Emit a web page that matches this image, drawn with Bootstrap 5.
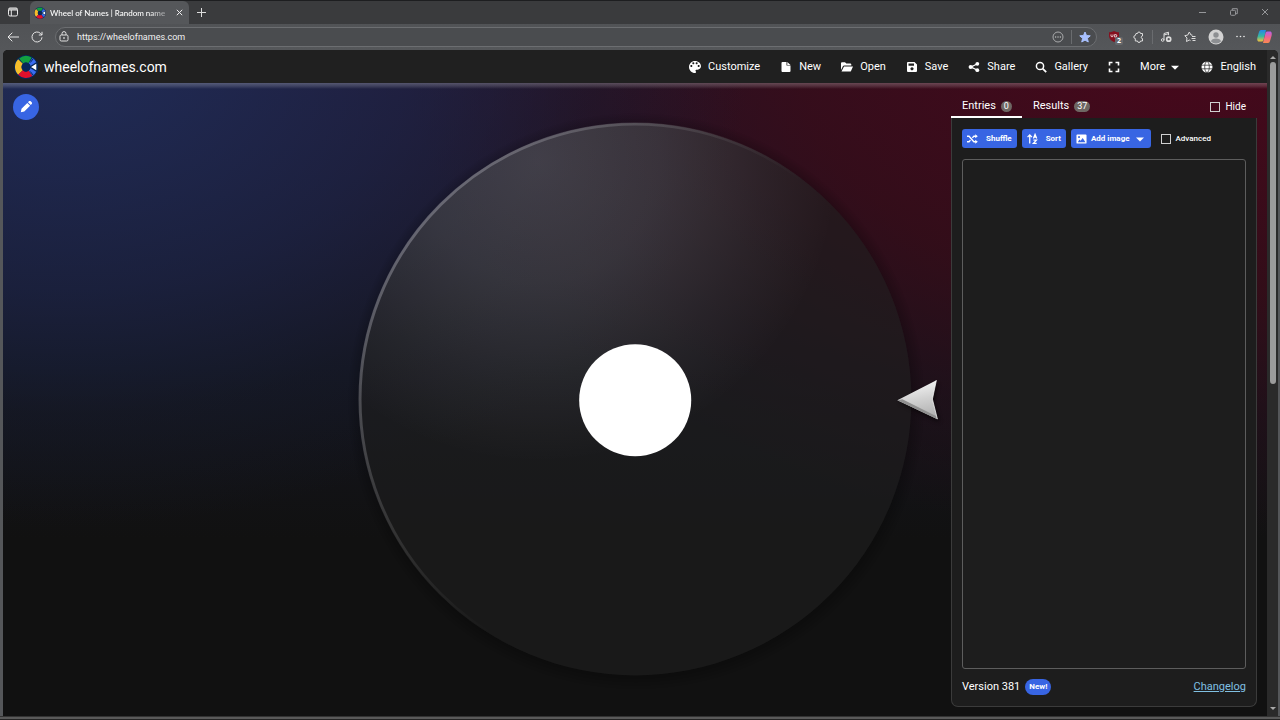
<!DOCTYPE html>
<html lang="en" data-bs-theme="dark">
<head>
<meta charset="utf-8">
<meta name="viewport" content="width=device-width, initial-scale=1">
<title>Wheel of Names | Random name picker</title>
<link rel="stylesheet" href="https://cdn.jsdelivr.net/npm/bootstrap@5.3.0/dist/css/bootstrap.min.css">
<style>
  body { font-family: Roboto, sans-serif; font-size: 11px; line-height: 16px; color: #fff; background: #55575a; }
  svg { display: block; flex: none; }
  button.plain { background: none; border: 0; padding: 0; color: inherit; display: flex; align-items: center; }

  /* browser frame */
  .chrome { font-family: Lato, sans-serif; font-size: 8px; line-height: 12px; color: #fff; }
  .titlebar { height: 24px; background: #3a3b3d; border-top: 1px solid #1d1e20; padding-bottom: 1px; }
  .tab-actions { width: 30px; }
  .browser-tab { width: 159px; background: #55575a; border-radius: 6px 6px 0 0; padding: 0 6px 0 4px; margin-bottom: -1px; }
  .tab-title { font-weight: 500; white-space: nowrap; -webkit-mask-image: linear-gradient(90deg, #000 85%, rgba(0,0,0,.4)); mask-image: linear-gradient(90deg, #000 85%, rgba(0,0,0,.4)); }
  .window-btns { gap: 23px; padding-right: 11px; color: #96979a; }
  .toolbar { height: 26px; padding: 0 8px 1px 7px; background: linear-gradient(#515356, #55575a); }
  .address { height: 20px; border-radius: 10px; border: 1px solid #6c6e71; background: #4a4c4f; padding: 0 5px 0 3px; }
  .address input { background: none; border: 0; outline: 0; color: #f1f1f1; padding: 0; font: 9px/12px Roboto, sans-serif; min-width: 0; }
  .divider { width: 1px; height: 14px; background: #6a6c6f; margin: 0 7px; }
  .extensions { gap: 12px; }
  .extensions .divider { margin: 0 -5px; }
  .blocked { right: -2px; bottom: -1px; background: #66686c; border-radius: 2px; font: 700 7px/8px "Open Sans", sans-serif; padding: 0 2px; }

  /* page inside the window */
  .viewport { margin: 0 2px 0 3px; border-radius: 5px 5px 0 0; overflow: hidden; background: #111; }
  .frame-bottom { height: 4px; background: linear-gradient(#333 1px, #5a5a5a 1px 3px, #242424 3px); }
  .topbar { height: 33px; background: #202020; padding: 0 11px; font-size: 11px; font-weight: 500; }
  .topbar .brand { font-size: 14px; font-weight: 400; color: #fff; text-decoration: none; gap: 6px; }
  .menu { gap: 20px; }
  .menu button { gap: 7px; }
  .menu .more { gap: 4px; }
  .stage {
    display: grid; grid-template-columns: minmax(0, 1fr) auto minmax(0, 1fr);
    background:
      linear-gradient(rgba(255,255,255,.24), rgba(255,255,255,.14) 3px, rgba(255,255,255,0) 6px),
      radial-gradient(ellipse 54% 74% at 5% -4%, rgba(30,50,98,.8), rgba(27,39,76,.6) 50%, rgba(24,32,54,.3) 76%, rgba(17,17,17,0)),
      radial-gradient(ellipse 62% 76% at 94% -4%, rgba(76,6,24,.85), rgba(60,10,20,.7) 50%, rgba(44,12,22,.45) 76%, rgba(17,17,17,0)),
      linear-gradient(#26152e, #14151f 45%, #111 72%);
  }
  .edit-btn { width: 26px; height: 26px; background: #3865e3 !important; justify-content: center; margin: 11px 0 0 10px; }
  .wheel-area { align-self: center; }
  .wheel { width: 77vh; max-width: 100%; height: auto; overflow: visible; }

  .side { width: 306px; max-width: 100%; margin: 12px 10px 9px auto; }
  .entry-tabs { height: 23px; font-weight: 500; }
  .entry-tabs button { padding: 1px 10px 0 11px !important; gap: 5px; border-bottom: 2px solid transparent; height: 100%; }
  .entry-tabs button.active { border-bottom-color: #fff; }
  .count { background: #6e6763; border-radius: 6px; font-size: 9px; line-height: 11px; height: 11px; padding: 0 3px; }
  .hide-label { font-size: 10px; font-weight: 400; padding-right: 11px; gap: 5px; }
  .pane { background: #1d1d1d; border: 1px solid #3b3b3b; border-top: 0; border-radius: 0 0 7px 7px; padding: 11px 10px; }
  .tool { background: #3865e3; color: #fff; border: 0; border-radius: 3px; height: 19px; font-size: 8px; line-height: 12px; font-weight: 700; display: flex; align-items: center; padding: 0 5px; }
  .tool-row { gap: 5px; }
  .box { appearance: none; width: 10px; height: 10px; border: 1px solid #d0d0d0; margin: 0; flex: none; }
  .advanced { font-size: 8px; font-weight: 500; gap: 5px; margin-left: 5px; }
  .entries { background: #1d1d1d; border: 1px solid #5d5d5d; border-radius: 3px; resize: none; outline: 0; color: #fff; margin: 11px 0 10px; }
  .new-pill { background: #3865e3; border-radius: 8px; font-size: 8px; line-height: 16px; font-weight: 700; padding: 0 4px; margin-left: 5px; }
  .changes { color: #80c0e2; }

  .scroller { width: 11px; background: #2a2a2a; }
  .thumb { width: 6px; flex: 0 0 322px; background: #9b9b9b; border-radius: 3px; }
</style>
</head>
<body class="d-flex flex-column min-vh-100">

<svg width="0" height="0" class="position-absolute" aria-hidden="true">
  <symbol id="logo" viewBox="0 0 24 24">
    <circle cx="12" cy="12" r="12" fill="#07285a"/>
    <g fill="none" stroke-width="6.500">
      <path d="M16.600 5.600A7.800 7.800 0 0 1 16.600 18.400" stroke="#3a6cf0"/>
      <path d="M6.500 17.500A7.800 7.800 0 0 1 6.500 6.500" stroke="#f5bd2a"/>
      <path d="M7.200 6A7.800 7.800 0 0 1 16 5.400" stroke="#12a040"/>
      <path d="M16.500 18.400A7.800 7.800 0 0 1 6.500 17.500" stroke="#e0102c"/>
    </g>
    <path d="M16.300 7.500l2.700-3.500M16.300 16.500L19 20" stroke="#07285a"/>
    <circle cx="12" cy="12" r="4.400" fill="#07285a"/>
    <path d="M16 12l7-4.500v9z" fill="#fff" stroke="#07285a" stroke-width="1.400"/>
  </symbol>
</svg>

<header class="chrome">
  <div class="titlebar d-flex">
    <button class="plain tab-actions px-2" aria-label="Tab actions">
      <svg width="10" height="10" viewBox="0 0 10 10" fill="none" stroke="#e8e8e8"><rect x=".5" y="1" width="9" height="8" rx="1.5"/><path d="M1 2h8M1 3h8M3.3 3v6"/></svg>
    </button>
    <div class="browser-tab d-flex align-items-center">
      <svg width="12" height="12" class="me-1"><use href="#logo"/></svg>
      <span class="tab-title">Wheel of Names | Random name</span>
      <button class="plain ms-auto" aria-label="Close tab"><svg width="7" height="7" viewBox="0 0 7 7" stroke="#eee"><path d="M.8.8l5.4 5.4M6.2.8L.8 6.2"/></svg></button>
    </div>
    <button class="plain ms-2" aria-label="New tab"><svg width="9" height="9" viewBox="0 0 9 9" stroke="#ddd"><path d="M4.5 0v9M0 4.5h9"/></svg></button>
    <div class="window-btns d-flex align-items-center ms-auto">
      <button class="plain" aria-label="Minimize"><svg width="8" height="8" viewBox="0 0 8 8" stroke="currentColor" fill="none"><path d="M0 4.5h7"/></svg></button>
      <button class="plain" aria-label="Restore"><svg width="8" height="8" viewBox="0 0 8 8" stroke="currentColor" fill="none"><rect x=".5" y="2.3" width="5" height="5" rx="1"/><path d="M2.3 2V.7h5v5H6"/></svg></button>
      <button class="plain" aria-label="Close"><svg width="8" height="8" viewBox="0 0 8 8" stroke="currentColor" fill="none"><path d="M1 1l6 6M7 1L1 7"/></svg></button>
    </div>
  </div>
  <div class="toolbar d-flex align-items-center">
    <button class="plain" aria-label="Back"><svg width="12" height="10" viewBox="0 0 12 10" fill="none" stroke="#e6e6e6"><path d="M12 5H1M5.3.7L1 5l4.3 4.3"/></svg></button>
    <button class="plain ms-2 ps-1 me-2 pe-1" aria-label="Refresh"><svg width="12" height="12" viewBox="0 0 12 12" fill="none" stroke="#e6e6e6"><path d="M11 6.3A5 5 0 1 1 9.7 2.6L11 4M11 .8V4H7.8"/></svg></button>
    <div class="address d-flex align-items-center flex-grow-1">
      <svg width="10" height="11" viewBox="0 0 10 11" fill="none" stroke="#e2e2e2" class="me-2"><rect x="1" y="4" width="8" height="6" rx="1.3"/><path d="M3 4V2.6a2 2 0 0 1 4 0V4"/><circle cx="5" cy="7" r=".5"/></svg>
      <input class="flex-grow-1" type="text" value="https://wheelofnames.com" aria-label="Address">
      <button class="plain" aria-label="Site info"><svg width="12" height="12" viewBox="0 0 12 12" fill="none" stroke="#a9aaac"><circle cx="6" cy="6" r="5"/><path d="M3 6h1.2M5.4 6h1.2M7.8 6H9" stroke-width="1.4"/></svg></button>
      <span class="divider"></span>
      <button class="plain" aria-label="Favorite"><svg width="12" height="12" viewBox="0 0 24 24" fill="#a9c1ff" stroke="#a9c1ff" stroke-width="2" stroke-linejoin="round"><path d="M12 2l3 7 7.500.7-5.700 5 1.700 7.300L12 18.200 5.500 22l1.700-7.300-5.700-5L9 9z"/></svg></button>
    </div>
    <div class="extensions d-flex align-items-center ms-2 ps-1">
      <button class="plain position-relative" aria-label="Blocker, 2 blocked">
        <svg width="12" height="14" viewBox="0 0 12 14"><path d="M5 1C3.500 2 1.500 2.300 0 2.300V6c0 3 2.500 5 5 6 2.500-1 5-3 5-6V2.300C8.500 2.300 6.500 2 5 1z" fill="#86101f"/><path d="M2 4.500v1.300a1 1 0 0 0 2 0V4.500M5.700 4.500v2.600h.8a1.300 1.300 0 0 0 0-2.600z" fill="none" stroke="#fff" stroke-width=".8"/></svg>
        <span class="blocked position-absolute">2</span>
      </button>
      <button class="plain" aria-label="Extensions"><svg width="12" height="12" viewBox="0 0 12 12" fill="none" stroke="#dcdcdc"><path d="M3 2.500h1.500a1.500 1.500 0 0 1 3 0h2V5a1.300 1.300 0 0 0 0 2.600V10H7.500a1.500 1.500 0 0 1-3 0H2.300V7.500a1.500 1.500 0 0 1 0-3z" stroke-linejoin="round"/></svg></button>
      <span class="divider"></span>
      <button class="plain" aria-label="Media controls"><svg width="12" height="12" viewBox="0 0 12 12" fill="none" stroke="#dcdcdc"><path d="M4 9V2.500l4.500-1.300v3M4 4l4.500-1.300"/><circle cx="2.700" cy="9" r="1.300"/><circle cx="8.700" cy="8.200" r="2" stroke-width="1.700"/></svg></button>
      <button class="plain" aria-label="Favorites list"><svg width="12" height="12" viewBox="0 0 12 12" fill="none" stroke="#dcdcdc"><path d="M8.500 4.200L7 4 5.300 1 3.700 4.100.8 4.700 3 7l-.5 3.500L5.300 9l1.200.6M8 5.500h3.500M7.500 7.500h4M8.500 9.500h3" stroke-linejoin="round"/></svg></button>
      <button class="plain" aria-label="Profile"><svg width="16" height="16" viewBox="0 0 16 16"><circle cx="8" cy="8" r="7.500" fill="#d2d2d2"/><circle cx="8" cy="6" r="2.700" fill="#8d8f92"/><path d="M3 12.500c0-4 10-4 10 0a7 7 0 0 1-10 0z" fill="#8d8f92"/></svg></button>
      <button class="plain" aria-label="Settings"><svg width="9" height="3" viewBox="0 0 9 3" fill="#eee"><circle cx="1" cy="1.500" r=".8"/><circle cx="4.500" cy="1.500" r=".8"/><circle cx="8" cy="1.500" r=".8"/></svg></button>
      <button class="plain" aria-label="Copilot"><svg width="15" height="15" viewBox="0 0 15 15"><defs><linearGradient id="ca" x2="0" y2="1"><stop stop-color="#2487e8"/><stop offset=".55" stop-color="#38b7a0"/><stop offset="1" stop-color="#f5c33b"/></linearGradient><linearGradient id="cb" x2="0" y2="1"><stop stop-color="#b85fe8"/><stop offset=".5" stop-color="#f0648c"/><stop offset="1" stop-color="#fa8a50"/></linearGradient></defs><path d="M4 1h5L6.500 11c-.3 1-1 1.500-2 1.500H2C0 12.500 0 10 .5 8L2 3c.3-1 1-2 2-2z" fill="url(#ca)"/><path d="M11 14H6L8.500 4c.3-1 1-1.500 2-1.500H13c2 0 2 2.500 1.500 4.500L13 12c-.3 1-1 2-2 2z" fill="url(#cb)"/></svg></button>
    </div>
  </div>
</header>

<div class="viewport d-flex flex-grow-1">
  <div class="d-flex flex-column flex-grow-1">
    <nav class="topbar d-flex align-items-center">
      <a class="brand d-flex align-items-center me-auto" href="#"><svg width="24" height="24"><use href="#logo"/></svg>wheelofnames.com</a>
      <div class="menu d-flex align-items-center">
        <button class="plain"><svg width="12" height="12" viewBox="3 3 18 18" fill="#fff"><path d="M12 3c-4.970 0-9 4.030-9 9s4.030 9 9 9c.83 0 1.500-.67 1.500-1.500 0-.39-.15-.74-.39-1.010-.23-.26-.38-.61-.38-.99 0-.83.67-1.500 1.500-1.500H16c2.760 0 5-2.240 5-5 0-4.420-4.030-8-9-8zm-5.500 9c-.83 0-1.500-.67-1.500-1.500S5.670 9 6.500 9 8 9.670 8 10.500 7.330 12 6.500 12zm3-4C8.670 8 8 7.330 8 6.500S8.670 5 9.500 5s1.500.67 1.500 1.500S10.330 8 9.500 8zm5 0c-.83 0-1.500-.67-1.500-1.500S13.670 5 14.500 5s1.500.67 1.500 1.500S15.330 8 14.500 8zm3 4c-.83 0-1.500-.67-1.500-1.500S16.670 9 17.500 9s1.500.67 1.500 1.500-.67 1.500-1.500 1.500z"/></svg>Customize</button>
        <button class="plain"><svg width="12" height="12" viewBox="0 0 12 12" fill="#fff"><path d="M2.500 1h4v3.500H10.500V10a1 1 0 0 1-1 1h-7a1 1 0 0 1-1-1V2a1 1 0 0 1 1-1zM7.300 1l3.200 2.900H7.300z"/></svg>New</button>
        <button class="plain"><svg width="12" height="12" viewBox="0 0 12 12" fill="#fff"><path d="M0 9V2.200a1 1 0 0 1 1-1h3l1.300 1.300h4a1 1 0 0 1 1 1v1H3.200a1.500 1.500 0 0 0-1.300.8zM3 5.400h9l-2 4.600a1 1 0 0 1-1 .6H.5z"/></svg>Open</button>
        <button class="plain"><svg width="12" height="12" viewBox="0 0 12 12" fill="#fff" fill-rule="evenodd"><path d="M2 1h6.500L11 3.500V10a1 1 0 0 1-1 1H2a1 1 0 0 1-1-1V2a1 1 0 0 1 1-1zm.5 1.500v2.300h5.500V2.500zM6 6.200a1.600 1.600 0 1 0 .01 0z"/></svg>Save</button>
        <button class="plain"><svg width="12" height="12" viewBox="0 0 12 12" fill="#fff"><path d="M9 3L3 6l6 3" fill="none" stroke="#fff" stroke-width="1.300"/><circle cx="9.300" cy="2.800" r="1.900"/><circle cx="2.700" cy="6" r="2.100"/><circle cx="9.300" cy="9.200" r="1.900"/></svg>Share</button>
        <button class="plain"><svg width="12" height="12" viewBox="0 0 12 12" fill="none" stroke="#fff" stroke-width="1.500"><circle cx="5" cy="5" r="3.600"/><path d="M7.700 7.700l3.500 3.500" stroke-width="1.800"/></svg>Gallery</button>
        <button class="plain" aria-label="Fullscreen"><svg width="12" height="12" viewBox="0 0 12 12" fill="none" stroke="#fff" stroke-width="1.600"><path d="M1.500 4.500v-3h3M7.500 1.500h3v3M10.500 7.500v3h-3M4.500 10.500h-3v-3"/></svg></button>
        <button class="plain more">More<svg width="12" height="12" viewBox="0 0 12 12" fill="#fff"><path d="M2 4.800h8L6 8.800z"/></svg></button>
        <button class="plain"><svg width="12" height="12" viewBox="0 0 12 12"><circle cx="6" cy="6" r="5.500" fill="#fff"/><g fill="none" stroke="#202020" stroke-width=".7"><ellipse cx="6" cy="6" rx="2.300" ry="5.500"/><path d="M.5 4.200h11M.5 7.800h11"/></g></svg>English</button>
      </div>
    </nav>

    <main class="stage flex-grow-1">
      <div>
        <button class="plain edit-btn rounded-circle" aria-label="Edit title"><svg width="14" height="14" viewBox="0 0 14 14" fill="#fff"><path d="M1.800 12.200l.7-3.500L8.300 2.900l2.800 2.800-5.800 5.800zM9 2.200l.9-.9c.5-.5 1.300-.4 1.800 0l1 1c.5.500.5 1.300 0 1.800l-.9.9z"/></svg></button>
      </div>
      <div class="wheel-area">
        <svg class="wheel" viewBox="0 0 554 554" role="img" aria-label="Empty wheel">
          <defs>
            <radialGradient id="sheen" gradientUnits="userSpaceOnUse" cx="180" cy="40" r="300"><stop stop-color="#dcdcf0" stop-opacity=".18"/><stop offset=".4" stop-color="#dcdcf0" stop-opacity=".13"/><stop offset=".75" stop-color="#dcdcf0" stop-opacity=".05"/><stop offset="1" stop-color="#dcdcf0" stop-opacity="0"/></radialGradient>
            <linearGradient id="rim" x1=".1" y1=".15" x2=".75" y2=".6"><stop stop-color="#b4b4c0" stop-opacity=".42"/><stop offset=".45" stop-color="#aaa" stop-opacity=".14"/><stop offset=".7" stop-color="#888" stop-opacity="0"/></linearGradient>
            <linearGradient id="dart" x1=".3" y1="0" x2=".5" y2="1"><stop stop-color="#fafafa"/><stop offset=".5" stop-color="#d2d2d2"/><stop offset="1" stop-color="#b0b0b0"/></linearGradient>
            <radialGradient id="halo"><stop offset=".95" stop-color="#000" stop-opacity=".25"/><stop offset="1" stop-color="#000" stop-opacity="0"/></radialGradient>
            <mask id="ring-only"><path fill="#fff" d="M-20-20h600v600h-600z"/><circle cx="277" cy="277" r="276"/></mask>
            <filter id="soft" x="-30%" y="-30%" width="160%" height="160%"><feGaussianBlur stdDeviation="2"/></filter>
          </defs>
          <circle cx="278" cy="279" r="288" fill="url(#halo)" mask="url(#ring-only)"/>
          <circle cx="277" cy="277" r="276" fill="#1e1e1e" fill-opacity=".62"/>
          <circle cx="277" cy="277" r="276" fill="url(#sheen)"/>
          <circle cx="277" cy="277" r="275" fill="none" stroke="url(#rim)" stroke-width="3"/>
          <circle cx="277" cy="278" r="56" fill="#fff"/>
          <path d="M541 280l38-19-3 19 5 20z" fill="#000" opacity=".6" filter="url(#soft)"/>
          <path d="M539 278l39-20-4 19 5 20z" fill="url(#dart)"/>
          <path d="M539 278l40 19-1-3-34-17z" fill="#909090"/>
          <path d="M578 258l-4 19 5 20" fill="none" stroke="#fff" stroke-opacity=".7"/>
        </svg>
      </div>
      <aside class="d-flex">
        <div class="side d-flex flex-column">
          <div class="entry-tabs d-flex" role="tablist">
            <button class="plain active" role="tab" aria-selected="true">Entries <span class="count">0</span></button>
            <button class="plain" role="tab" aria-selected="false">Results <span class="count">37</span></button>
            <label class="hide-label d-flex align-items-center ms-auto"><input class="box" type="checkbox">Hide</label>
          </div>
          <div class="pane d-flex flex-column flex-grow-1">
            <div class="tool-row d-flex align-items-center">
              <button class="tool"><svg class="me-2" width="11" height="12" viewBox="0 0 12 12" fill="none" stroke="#fff" stroke-width="1.500"><path d="M0 3h2.200L7.500 9H10M0 9h2.200l1.600-1.800M5.800 4.800L7.500 3H10"/><path d="M9 .8L11.800 3 9 5.200zM9 6.800L11.800 9 9 11.200z" fill="#fff" stroke="none"/></svg>Shuffle</button>
              <button class="tool"><svg class="me-2" width="11" height="12" viewBox="0 0 12 12" fill="none" stroke="#fff" stroke-width="1.400"><path d="M3 11V2M.6 4L3 1.500 5.400 4M7 5.500L8.800 1l1.800 4.500M7.500 4h2.600M7 7.300h3.300L7 10.700h3.600"/></svg>Sort</button>
              <button class="tool"><svg class="me-1" width="11" height="12" viewBox="0 0 12 12" fill="#fff" fill-rule="evenodd"><path d="M1.500 1h9a1 1 0 0 1 1 1v8a1 1 0 0 1-1 1h-9a1 1 0 0 1-1-1V2a1 1 0 0 1 1-1zM2 9.500h8.300L7.300 5 5 8 3.700 6.500zM3.300 2.600a1.100 1.100 0 1 0 .01 0z"/></svg>Add image<svg class="ms-1" width="12" height="12" viewBox="0 0 12 12" fill="#fff"><path d="M2 4.500h8L6 8.500z"/></svg></button>
              <label class="advanced d-flex align-items-center"><input class="box" type="checkbox">Advanced</label>
            </div>
            <textarea class="entries flex-grow-1" aria-label="Entries"></textarea>
            <div class="d-flex align-items-center">
              <span>Version 381</span><span class="new-pill">New!</span>
              <a class="changes ms-auto" href="#">Changelog</a>
            </div>
          </div>
        </div>
      </aside>
    </main>
  </div>
  <div class="scroller d-flex flex-column align-items-center py-1">
    <svg width="8" height="8" viewBox="0 0 8 8" fill="#aaa"><path d="M1 5h6L4 2z"/></svg>
    <div class="thumb"></div>
    <svg class="mt-auto" width="8" height="8" viewBox="0 0 8 8" fill="#aaa"><path d="M1 3h6L4 6z"/></svg>
  </div>
</div>
<div class="frame-bottom"></div>

<script src="https://cdn.jsdelivr.net/npm/bootstrap@5.3.0/dist/js/bootstrap.bundle.min.js"></script>
</body>
</html>
